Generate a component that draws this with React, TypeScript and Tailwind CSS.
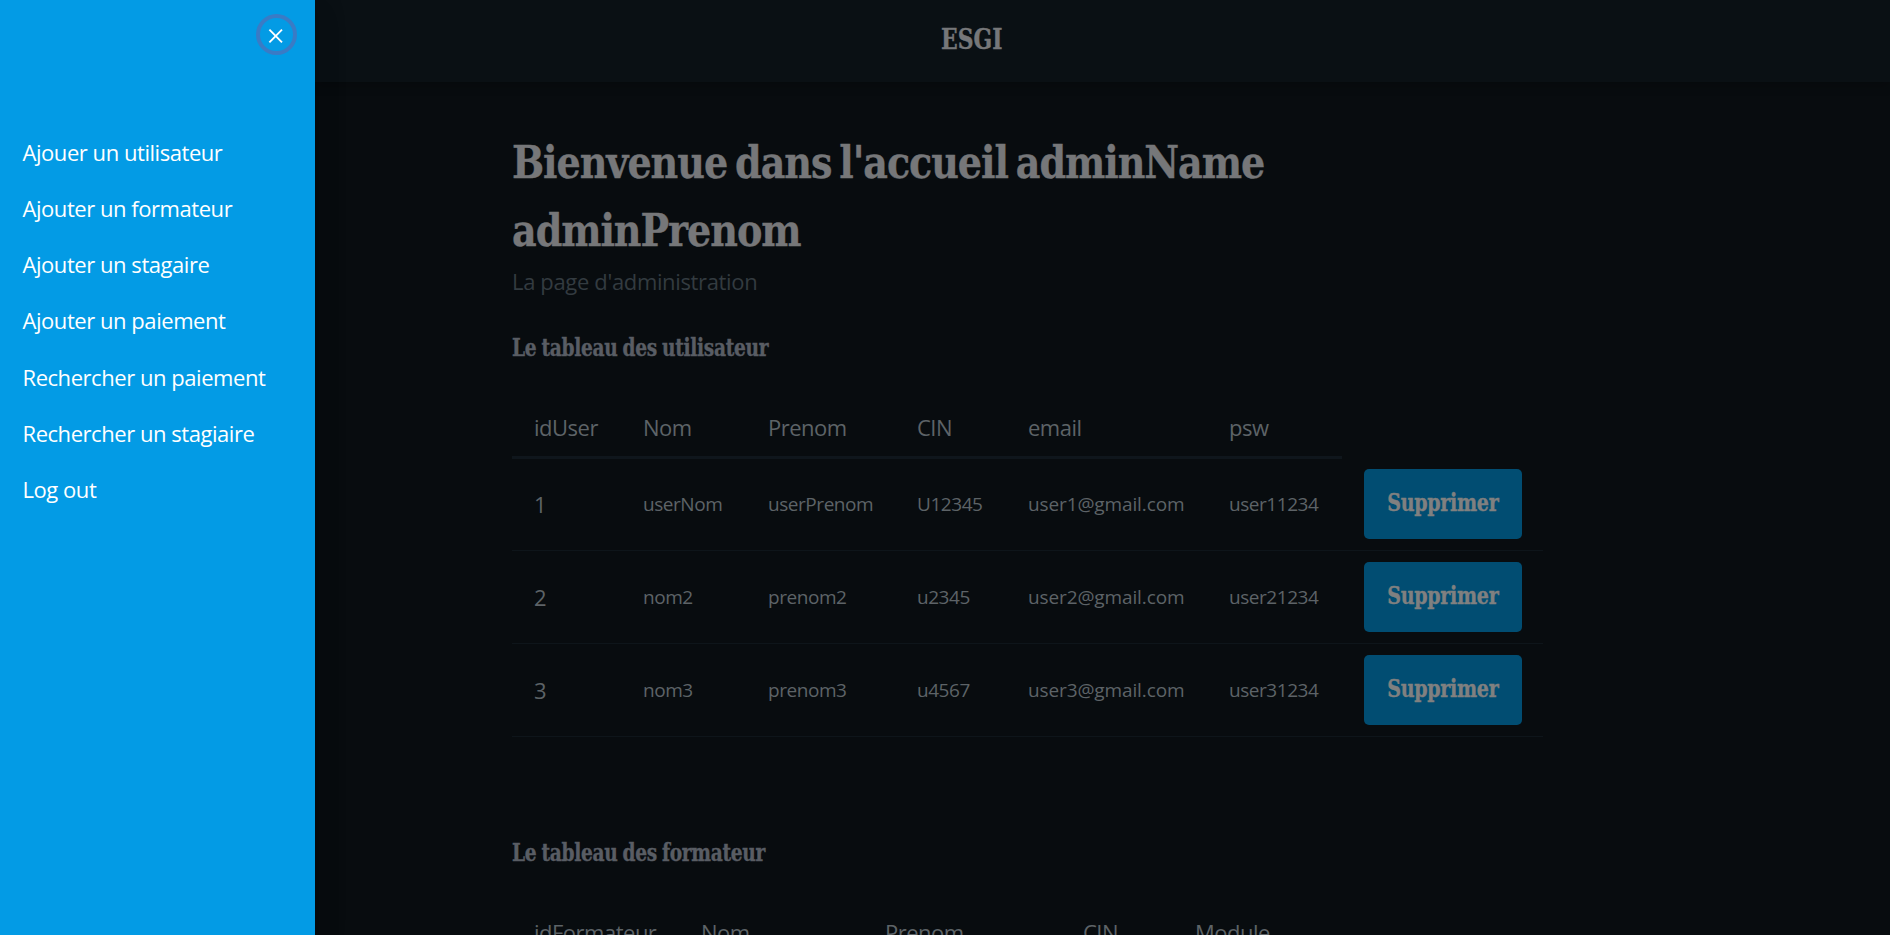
type Column = { label: string; width: string };

const LINKS = [
  "Ajouer un utilisateur",
  "Ajouter un formateur",
  "Ajouter un stagaire",
  "Ajouter un paiement",
  "Rechercher un paiement",
  "Rechercher un stagiaire",
  "Log out",
];

const USER_COLUMNS: Column[] = [
  { label: "idUser", width: "w-[109px]" },
  { label: "Nom", width: "w-[125px]" },
  { label: "Prenom", width: "w-[149px]" },
  { label: "CIN", width: "w-[111px]" },
  { label: "email", width: "w-[201px]" },
  { label: "psw", width: "w-[135px]" },
];

const TRAINER_COLUMNS: Column[] = [
  { label: "idFormateur", width: "w-[167px]" },
  { label: "Nom", width: "w-[184px]" },
  { label: "Prenom", width: "w-[198px]" },
  { label: "CIN", width: "w-[112px]" },
  { label: "Module", width: "w-[167px]" },
];

const USERS = [
  ["1", "userNom", "userPrenom", "U12345", "user1@gmail.com", "user11234"],
  ["2", "nom2", "prenom2", "u2345", "user2@gmail.com", "user21234"],
  ["3", "nom3", "prenom3", "u4567", "user3@gmail.com", "user31234"],
];

const SERIF = "font-['DejaVu_Serif_Condensed','DejaVu_Serif',serif] font-bold [-webkit-text-stroke:0.4px_currentColor]";

function TableHead({ columns }: { columns: Column[] }) {
  return (
    <div className="flex h-[59px] w-fit border-b-[3px] border-[#0f161c]">
      {columns.map((c) => (
        <div key={c.label} className={`${c.width} shrink-0 pt-[10px] pl-[22px] text-[22px] leading-[34px] tracking-[-0.5px]`}>
          {c.label}
        </div>
      ))}
    </div>
  );
}

function SectionTitle({ children }: { children: string }) {
  return (
    <h2 className={`${SERIF} w-fit origin-left scale-x-[0.88] text-[23.5px] leading-[34px] tracking-[-0.35px] whitespace-nowrap [word-spacing:-1.2px] text-[#595d64]`}>
      {children}
    </h2>
  );
}

function Sidebar() {
  return (
    <aside className="relative z-10 flex h-full w-[315px] shrink-0 flex-col bg-[#039be5] text-white shadow-[0_8px_10px_-5px_rgba(0,0,0,0.1),0_16px_24px_2px_rgba(0,0,0,0.1),0_6px_30px_5px_rgba(0,0,0,0.08)]">
      <div className="flex h-[122.5px] justify-end pt-[14px] pr-[18.5px]">
        <button className="flex h-[41px] w-[41px] items-center justify-center rounded-full border-4 border-[#3a7bc5]" aria-label="Fermer">
          <svg width="16" height="16" viewBox="0 0 16 16" className="mt-[2px] shrink-0" fill="none" stroke="white" strokeWidth="1.9">
            <path d="M1.4 1.7 14 14.3M14 1.7 1.4 14.3" />
          </svg>
        </button>
      </div>
      <nav className="flex flex-col pl-[22.5px] font-[450]">
        {LINKS.map((l) => (
          <a key={l} className="h-[56.25px] pt-[12px] text-[22px] leading-[34px] tracking-[-0.45px] whitespace-nowrap">
            {l}
          </a>
        ))}
      </nav>
    </aside>
  );
}

export default function App() {
  return (
    <div className="flex h-[935px] w-full overflow-hidden bg-[#080c0f] font-['Open_Sans','Noto_Sans',sans-serif] text-[#5d6367]">
      <Sidebar />
      <div className="flex min-w-0 flex-1 flex-col">
        <header className="flex h-[82px] shrink-0 items-center bg-[#0a1014] pl-[625.5px] shadow-[0_4px_10px_rgba(0,0,0,0.2)]">
          <div className={`${SERIF} origin-left scale-x-[0.9] pb-[2px] text-[27px] leading-[40px] text-[#767779]`}>ESGI</div>
        </header>
        <main className="ml-[197px] flex w-[1031px] flex-col">
          <h1 className={`${SERIF} mt-[47px] w-[860px] origin-left scale-x-[0.94] text-[45px] leading-[68px] tracking-[-1.1px] [word-spacing:-4.5px] text-[#767779]`}>
            Bienvenue dans l'accueil adminName adminPrenom
          </h1>
          <p className="mt-[-1px] text-[22px] leading-[34px] tracking-[-0.35px] text-[#333b40]">La page d'administration</p>
          <div className="mt-[33px]">
            <SectionTitle>Le tableau des utilisateur</SectionTitle>
          </div>
          <div className="mt-[35px]">
            <TableHead columns={USER_COLUMNS} />
            {USERS.map((row, n) => (
              <div key={row[0]} className={`flex items-center border-b border-[#0e151a] ${n === 0 ? "h-[92px]" : "h-[93px]"}`}>
                {row.map((cell, i) => (
                  <div
                    key={i}
                    className={`${USER_COLUMNS[i].width} shrink-0 pl-[22px] whitespace-nowrap ${i === 0 ? "text-[22px]" : i === 4 ? "text-[19px] tracking-[-0.12px]" : "text-[19px] tracking-[-0.45px]"}`}
                  >
                    {cell}
                  </div>
                ))}
                <button
                  className={`ml-[22px] flex h-[70px] w-[158px] justify-center self-start rounded-[5px] bg-[#014d72] pt-[17px] text-[#808080] ${n === 0 ? "mt-[10px]" : "mt-[11px]"}`}
                >
                  <span className={`${SERIF} scale-x-[0.9] text-[23.5px] leading-[34px] tracking-[-0.3px]`}>Supprimer</span>
                </button>
              </div>
            ))}
          </div>
          <div className="mt-[99px]">
            <SectionTitle>Le tableau des formateur</SectionTitle>
          </div>
          <div className="mt-[35px]">
            <TableHead columns={TRAINER_COLUMNS} />
          </div>
        </main>
      </div>
    </div>
  );
}
